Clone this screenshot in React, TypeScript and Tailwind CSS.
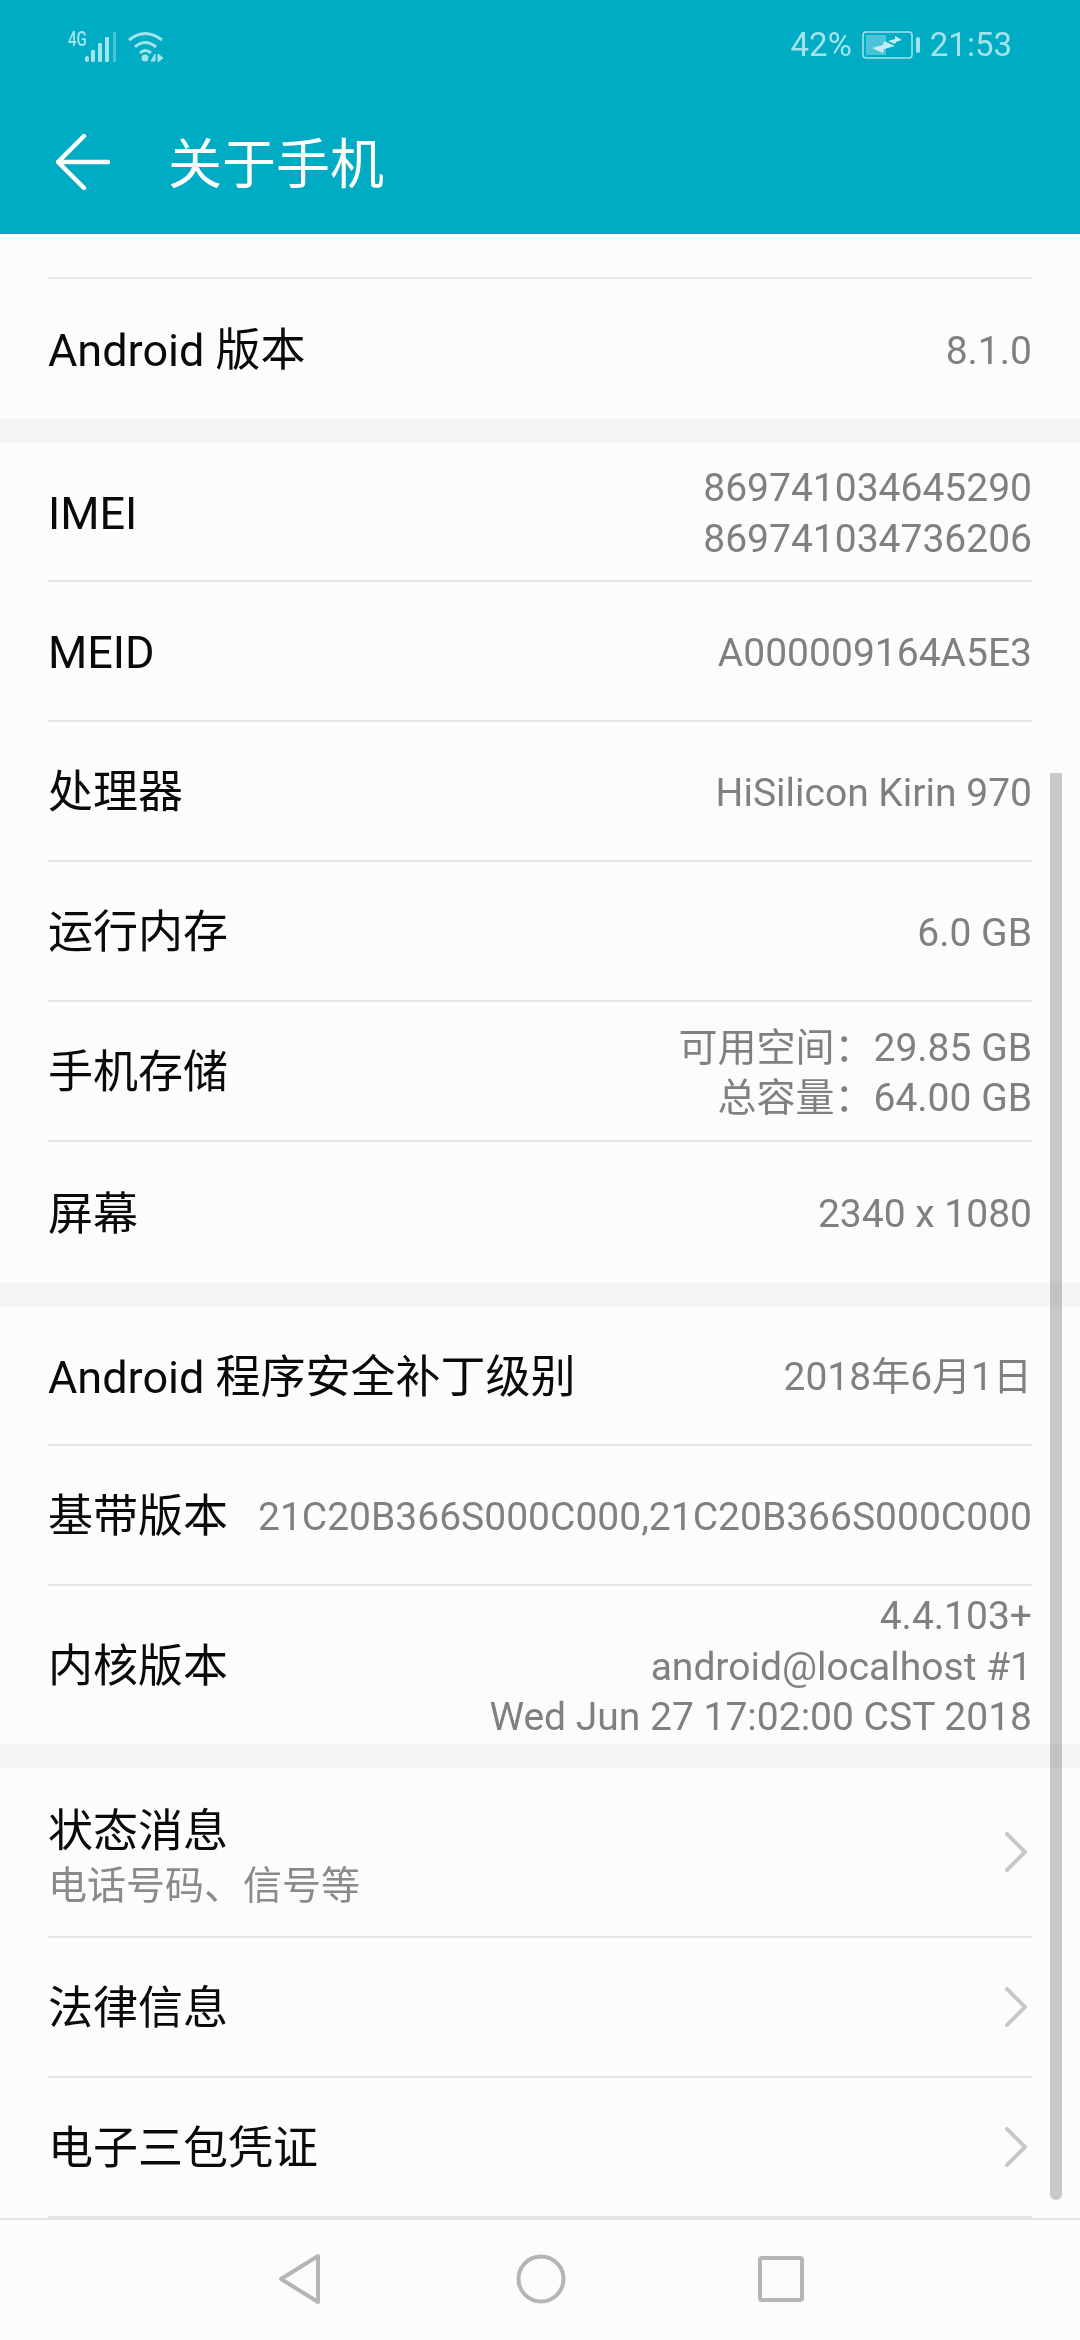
const cjk = "font-['Roboto','Noto_Sans_CJK_SC',sans-serif]";

function Chevron() {
  return (
    <svg width="24" height="40" viewBox="0 0 24 40" className="shrink-0 ml-[20px] mr-[4px]" fill="none">
      <path d="M3 2 L21 20 L3 38" stroke="#c8c8c8" strokeWidth="4" strokeLinecap="round" strokeLinejoin="round" />
    </svg>
  );
}

function Row({
  label,
  sub,
  values,
  height,
  arrow,
  last,
}: {
  label: string;
  sub?: string;
  values?: string[];
  height: string;
  arrow?: boolean;
  last?: boolean;
}) {
  return (
    <div className={`mx-[48px] flex items-center justify-between box-border ${height} ${last ? "" : "border-b-2 border-[#e6e6e6]"}`}>
      <div className={`shrink-0 ${sub ? "pt-[9px]" : "pt-[4px]"}`}>
        <div className="text-[45px] leading-[54px] text-[#0a0a0a]">{label}</div>
        {sub ? <div className="text-[39px] leading-[46px] text-[#8a8a8a] mt-[4px]">{sub}</div> : null}
      </div>
      {values ? (
        <div className="pt-[4px] text-right text-[39px] leading-[50.5px] text-[#808080] whitespace-nowrap">
          {values.map((v) => (
            <div key={v}>{v}</div>
          ))}
        </div>
      ) : null}
      {arrow ? <Chevron /> : null}
    </div>
  );
}

function Gap() {
  return <div className="h-[24px] bg-[#f5f5f5]" />;
}

function StatusBar() {
  return (
    <div className="h-[90px] flex items-start justify-between pl-[68px] pr-[68px] pt-[26px]">
      <div className="flex items-start mt-[4px]">
        <span className="inline-block w-[17px] origin-left scale-x-[.72] text-[21px] leading-[18px] font-medium text-[#a3e3ed] font-['Roboto',sans-serif]">4G</span>
        <svg width="34" height="34" viewBox="0 0 34 34">
          <rect x="0" y="26" width="4" height="6" rx="2" fill="#a3e3ed" />
          <rect x="6" y="20" width="4" height="12" rx="1" fill="#a3e3ed" />
          <rect x="13" y="13" width="4" height="19" rx="1" fill="#a3e3ed" />
          <rect x="20" y="7" width="4" height="25" rx="1" fill="#a3e3ed" />
          <rect x="28" y="2" width="3" height="30" fill="#a3e3ed" opacity=".45" />
        </svg>
        <svg width="38" height="34" viewBox="0 0 38 34" className="ml-[8px]" fill="none" stroke="#a3e3ed" strokeWidth="3">
          <path d="M2 10 Q18 -3 35 10" />
          <path d="M8 17 Q18 8 29 17" />
          <path d="M13 23 Q18 18 24 23" />
          <circle cx="18" cy="28" r="3.5" fill="#a3e3ed" stroke="none" />
          <path d="M24 31 L28 24 L28 31 Z M31 24 L36 28 L31 32 Z" fill="#a3e3ed" strokeWidth="1" />
        </svg>
      </div>
      <div className="flex items-center text-[33px] leading-[38px] text-[#a3e3ed] font-['Roboto',sans-serif]">
        <span>42%</span>
        <svg width="52" height="28" viewBox="0 0 52 28" className="ml-[10px]" fill="none">
          <rect x="1" y="1" width="49" height="26" rx="3" stroke="#a3e3ed" strokeWidth="1.5" />
          <rect x="4" y="4" width="20" height="20" fill="#a3e3ed" opacity=".45" />
          <path d="M10 17 L21 14 L22 10 L33 15 L22 18 L21 22 Z" fill="#c4eef4" />
          <path d="M26 10 L33 8 L33 5 L40 9 L34 11 L33 13 Z" fill="#c4eef4" />
        </svg>
        <div className="w-[4px] h-[16px] rounded-[2px] bg-[#a3e3ed] ml-[2px] mr-[10px]" />
        <span>21:53</span>
      </div>
    </div>
  );
}

export default function App() {
  return (
    <div className={`w-[1080px] h-[2340px] overflow-hidden flex flex-col bg-[#fcfcfc] ${cjk}`}>
      <header className="h-[234px] shrink-0 bg-[#00acc4]">
        <StatusBar />
        <div className="flex items-center h-[144px] pl-[56px]">
          <svg width="54" height="56" viewBox="0 0 54 56" fill="none" stroke="#fff" strokeWidth="4.5" strokeLinecap="round" strokeLinejoin="round">
            <path d="M28 2 L2 28 L28 54 M2 28 L52 28" />
          </svg>
          <h1 className="ml-[58px] pt-[8px] text-[54px] leading-[64px] text-white font-normal">关于手机</h1>
        </div>
      </header>

      <main className="relative flex-1 min-h-0 overflow-hidden">
        <div className="mx-[48px] h-[45px] border-b-2 border-[#e6e6e6]" />
        <Row label="Android 版本" values={["8.1.0"]} height="h-[140px]" last />
        <Gap />
        <Row label="IMEI" values={["869741034645290", "869741034736206"]} height="h-[139px]" />
        <Row label="MEID" values={["A000009164A5E3"]} height="h-[140px]" />
        <Row label="处理器" values={["HiSilicon Kirin 970"]} height="h-[140px]" />
        <Row label="运行内存" values={["6.0 GB"]} height="h-[140px]" />
        <Row label="手机存储" values={["可用空间：29.85 GB", "总容量：64.00 GB"]} height="h-[140px]" />
        <Row label="屏幕" values={["2340 x 1080"]} height="h-[141px]" last />
        <Gap />
        <Row label="Android 程序安全补丁级别" values={["2018年6月1日"]} height="h-[139px]" />
        <Row label="基带版本" values={["21C20B366S000C000,21C20B366S000C000"]} height="h-[140px]" />
        <Row label="内核版本" values={["4.4.103+", "android@localhost #1", "Wed Jun 27 17:02:00 CST 2018"]} height="h-[158px]" last />
        <Gap />
        <Row label="状态消息" sub="电话号码、信号等" height="h-[170px]" arrow />
        <Row label="法律信息" height="h-[140px]" arrow />
        <Row label="电子三包凭证" height="h-[140px]" arrow />
        <div className="absolute right-[18px] top-[539px] w-[12px] h-[1427px] rounded-b-[6px] bg-[#c8c8c8]/95 mix-blend-multiply" />
      </main>

      <nav className="h-[122px] shrink-0 border-t-2 border-[#e6e6e6] flex items-center pl-[276px] pb-[3px]">
        <svg width="44" height="52" viewBox="0 0 44 52" className="mr-[196px]" fill="none" stroke="#b5b5b5" strokeWidth="4" strokeLinejoin="round">
          <path d="M42 3 L5 26 L42 49 Z" />
        </svg>
        <svg width="50" height="50" viewBox="0 0 50 50" className="mr-[192px]" fill="none" stroke="#b5b5b5" strokeWidth="4">
          <circle cx="25" cy="25" r="22.5" />
        </svg>
        <svg width="46" height="46" viewBox="0 0 46 46" fill="none" stroke="#b5b5b5" strokeWidth="4">
          <rect x="2" y="2" width="42" height="42" rx="2" />
        </svg>
      </nav>
    </div>
  );
}
